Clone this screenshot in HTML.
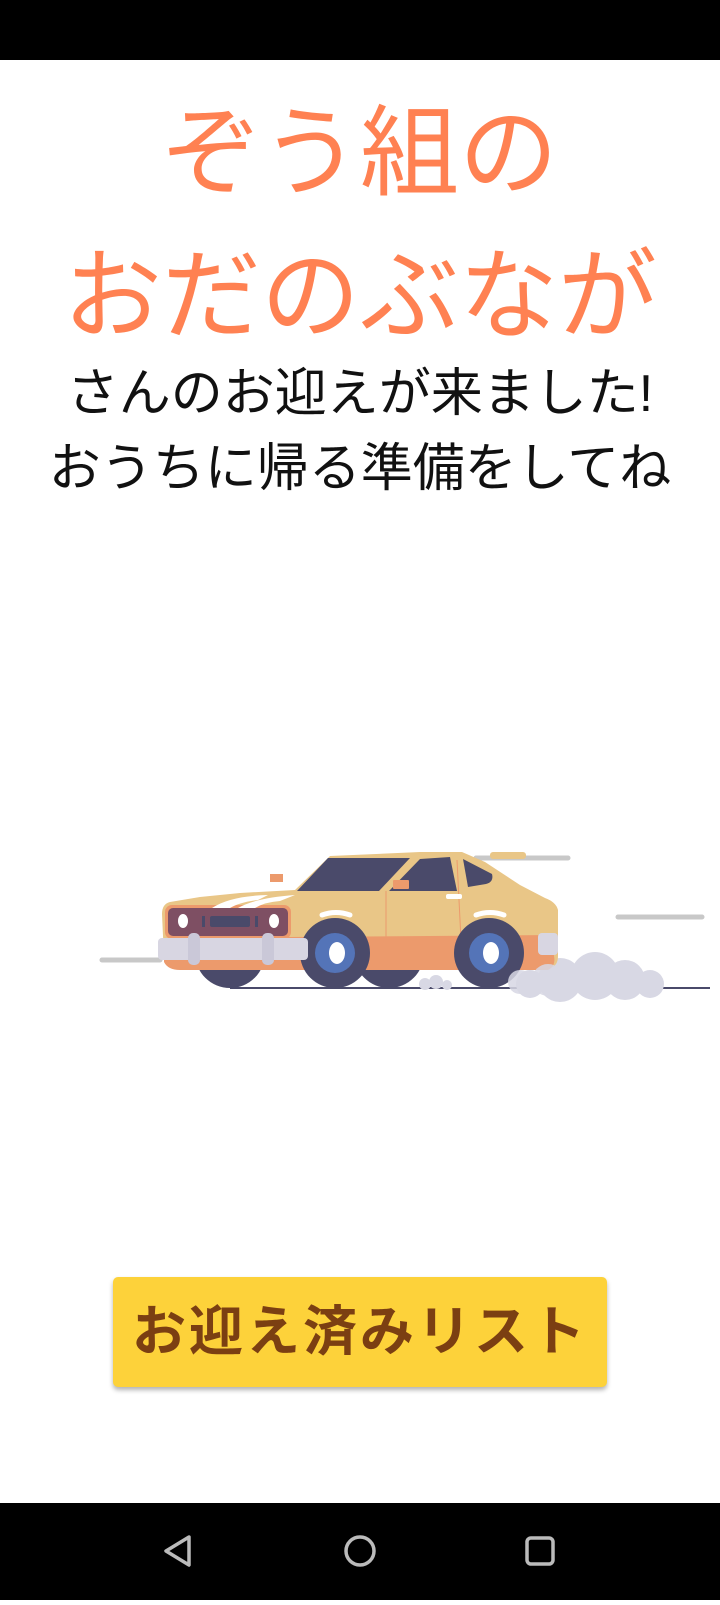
<!DOCTYPE html>
<html><head><meta charset="utf-8"><style>
html,body{margin:0;padding:0;width:720px;height:1600px;background:#fff;overflow:hidden;font-family:"Liberation Sans","Noto Sans CJK JP",sans-serif}
.sb{position:absolute;left:0;top:0;width:720px;height:60px;background:#000}
.nb{position:absolute;left:0;top:1503px;width:720px;height:97px;background:#000}
.t{position:absolute;left:0;width:720px;text-align:center;white-space:nowrap}
.o{color:#ff8152;font-size:99px;line-height:100px}
.k{color:#111;font-size:52px;line-height:56px}
.btn{position:absolute;left:113px;top:1277px;width:494px;height:110px;background:#fdd23a;border-radius:5px;box-shadow:0 3px 5px rgba(0,0,0,.3);color:#7b3f12;font-weight:bold;font-size:54px;line-height:110px;text-align:center;letter-spacing:3px}
</style></head><body>
<div class="sb"></div>
<div class="t o" style="top:103px">ぞう組の</div>
<div class="t o" style="top:246px">おだのぶなが</div>
<div class="t k" style="top:366px">さんのお迎えが来ました!</div>
<div class="t k" style="top:441px">おうちに帰る準備をしてね</div>
<svg style="position:absolute;left:90px;top:830px" width="630" height="200" viewBox="0 0 630 200">
<g stroke="#c8c8c8" stroke-width="5" stroke-linecap="round">
<line x1="12" y1="130" x2="70" y2="130"/><line x1="386" y1="28" x2="478" y2="28"/><line x1="528" y1="87" x2="612" y2="87"/></g>
<line x1="140" y1="158" x2="620" y2="158" stroke="#4a4a6a" stroke-width="2"/>
<g fill="#d8d8e4"><circle cx="470" cy="150" r="22"/><circle cx="505" cy="146" r="24"/><circle cx="535" cy="150" r="20"/><circle cx="560" cy="154" r="14"/><circle cx="440" cy="154" r="14"/><circle cx="335" cy="154" r="6"/><circle cx="346" cy="152" r="7"/><circle cx="357" cy="155" r="5"/></g>
<circle cx="140" cy="123" r="35" fill="#4a4a6a"/>
<circle cx="299" cy="123" r="35" fill="#4a4a6a"/>
<path d="M372 22 L330 22 L240 26 L205 60 L150 63 L110 67 L80 72 Q72 74 72 84 L74 128 Q78 138 90 138 L460 138 Q468 136 468 126 L468 80 Q466 72 455 68 L430 55 L395 32 Z" fill="#e9c687"/>
<rect x="400" y="22" width="36" height="7" rx="3" fill="#e9c687"/>
<path d="M74 108 L74 132 Q78 140 90 140 L458 140 Q466 136 464 126 L462 105 Z" fill="#ec9a6c"/>
<rect x="75" y="75" width="126" height="34" rx="7" fill="#ec9a6c"/>
<rect x="78" y="78" width="120" height="28" rx="5" fill="#7e4f63"/>
<ellipse cx="93" cy="91" rx="5" ry="7" fill="#fff"/><ellipse cx="184" cy="91" rx="5" ry="7" fill="#fff"/>
<rect x="120" y="86" width="40" height="11" rx="2" fill="#4a4a6a"/><rect x="112" y="86" width="3" height="11" fill="#4a4a6a"/><rect x="165" y="86" width="3" height="11" fill="#4a4a6a"/>
<path d="M207 61 L238 28 L320 28 L289 61 Z" fill="#4a4a6a"/>
<path d="M299 61 L330 29 L360 27 L367 61 Z" fill="#4a4a6a"/>
<path d="M373 29 L402 44 Q404 52 396 54 L378 57 Z" fill="#4a4a6a"/>
<line x1="296" y1="61" x2="296" y2="130" stroke="#ec9a6c" stroke-width="1"/>
<line x1="367" y1="30" x2="372" y2="130" stroke="#ec9a6c" stroke-width="1"/>
<rect x="303" y="50" width="16" height="9" rx="1" fill="#ec9a6c"/><rect x="180" y="44" width="13" height="8" fill="#ec9a6c"/>
<rect x="356" y="64" width="16" height="5" rx="2" fill="#fff"/>
<path d="M122 78 Q140 66 178 65 L168 70 Q150 72 140 78 Z" fill="#fff"/>
<path d="M148 78 Q165 68 205 65 L190 71 Q175 72 165 78 Z" fill="#fff"/>
<circle cx="245" cy="123" r="35" fill="#4a4a6a"/><circle cx="245" cy="123" r="20" fill="#5474b8"/><ellipse cx="247" cy="123" rx="8" ry="11" fill="#fff"/>
<circle cx="399" cy="123" r="35" fill="#4a4a6a"/><circle cx="399" cy="123" r="20" fill="#5474b8"/><ellipse cx="401" cy="123" rx="8" ry="11" fill="#fff"/>
<path d="M232 85 Q246 80 260 85" stroke="#fff" stroke-width="5" fill="none" stroke-linecap="round"/>
<path d="M386 85 Q400 80 414 85" stroke="#fff" stroke-width="5" fill="none" stroke-linecap="round"/>
<rect x="68" y="108" width="150" height="22" rx="4" fill="#d8d6e2"/>
<rect x="98" y="103" width="12" height="32" rx="5" fill="#cac8d8"/><rect x="172" y="103" width="12" height="32" rx="5" fill="#cac8d8"/>
<rect x="448" y="103" width="20" height="22" rx="4" fill="#d8d6e2"/>
<g fill="#d8d8e4" opacity=".85"><circle cx="430" cy="152" r="12"/><circle cx="458" cy="150" r="16"/></g>
</svg>
<div class="btn">お迎え済みリスト</div>
<div class="nb">
<svg width="720" height="97"><g fill="none" stroke="#bbb" stroke-width="3.5">
<path d="M189 34 L166 48 L189 62 Z" stroke-linejoin="round"/>
<circle cx="360" cy="48" r="14"/>
<rect x="527" y="35" width="26" height="26" rx="4"/></g></svg>
</div>
</body></html>
